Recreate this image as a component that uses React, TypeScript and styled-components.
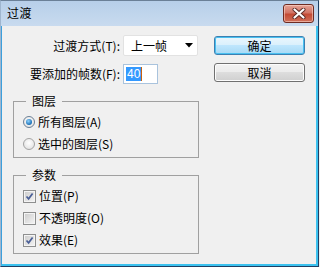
import styled, { createGlobalStyle } from 'styled-components';

const GlobalStyle = createGlobalStyle`
  html, body {
    margin: 0;
    padding: 0;
    background: #f0f0f0;
  }
  body {
    font-family: "Noto Sans CJK SC", "Liberation Sans", sans-serif;
    font-size: 12px;
    color: #000;
  }
`;

const Window = styled.div`
  width: 319px;
  height: 267px;
  box-sizing: border-box;
  display: flex;
  flex-direction: column;
  background: linear-gradient(#b7cfe9, #c9dbef 26px, #c3d6ec);
  border-top: 1px solid #6b8097;
  border-left: 1px solid #9fb6cf;
  border-right: 1px solid #1f3f63;
  border-bottom: 1px solid #1f3f63;
`;

const TitleBar = styled.div`
  height: 25px;
  flex: none;
  display: flex;
  align-items: flex-start;
  justify-content: space-between;
  padding: 0 4px 0 6px;
`;

const Title = styled.span`
  font-size: 12px;
  line-height: 24px;
  letter-spacing: 0.5px;
`;

const CloseButton = styled.button`
  margin-top: 3px;
  width: 31px;
  height: 19px;
  padding: 0;
  border: 1px solid #6e2b22;
  border-radius: 3px;
  background: linear-gradient(#e6a396, #d27566 45%, #c44b35 55%, #d0705a);
  box-shadow: inset 0 0 0 1px rgba(255, 220, 210, 0.55);
  display: flex;
  align-items: center;
  justify-content: center;
`;

const Client = styled.div`
  flex: 1;
  display: flex;
  gap: 15px;
  padding: 9px 11px 0 11px;
  background: #f0f0f0;
  border-left: 1px solid #3c9fdc;
  border-right: 2px solid #3cc2ef;
  border-bottom: 2px solid #3cc2ef;
`;

const MainColumn = styled.div`
  width: 186px;
  display: flex;
  flex-direction: column;
`;

const SideColumn = styled.div`
  width: 91px;
  display: flex;
  flex-direction: column;
  gap: 8px;
  padding-top: 1px;
`;

const FormRow = styled.div`
  display: grid;
  grid-template-columns: 107px auto;
  column-gap: 3px;
  align-items: center;
  height: 21px;
  margin-bottom: 7px;
`;

const Label = styled.label`
  text-align: right;
  white-space: nowrap;
  line-height: 16px;
`;

const Select = styled.div`
  width: 75px;
  height: 21px;
  box-sizing: border-box;
  display: flex;
  align-items: center;
  justify-content: space-between;
  padding: 0 4px 0 7px;
  background: #fff;
  border: 1px solid #e2e2e2;
  border-radius: 2px;
  line-height: 16px;
`;

const Input = styled.div`
  width: 35px;
  height: 20px;
  box-sizing: border-box;
  display: flex;
  align-items: center;
  padding-left: 2px;
  background: #fff;
  border: 1px solid #a9c3dd;
  font-family: "Liberation Sans", sans-serif;
  font-size: 12px;
`;

const Selected = styled.span`
  background: #3399ff;
  color: #fff;
  line-height: 14px;
  padding: 0 1px;
`;

const Caret = styled.span`
  width: 1px;
  height: 14px;
  background: #c8620e;
`;

const Button = styled.button<{ $default?: boolean }>`
  width: 91px;
  height: 19px;
  padding: 0;
  font-family: inherit;
  font-size: 12px;
  line-height: 16px;
  color: #000;
  border-radius: 3px;
  border: 1px solid ${(p) => (p.$default ? '#3c7fb1' : '#707070')};
  background: ${(p) =>
    p.$default
      ? 'linear-gradient(#eaf6fd, #d9f0fc 50%, #bee6fd 50%, #a7d9f5)'
      : 'linear-gradient(#f2f2f2, #ebebeb 50%, #dddddd 50%, #cfcfcf)'};
  box-shadow: ${(p) =>
    p.$default ? 'inset 0 0 0 1px #48c0f0' : 'inset 0 0 0 1px #fcfcfc'};
`;

const Group = styled.fieldset<{ $gapTop?: number }>`
  margin: ${(p) => p.$gapTop ?? 0}px 0 0 0;
  padding: 3px 0 2px 0;
  border: 1px solid #a0a0a0;
  min-width: 0;
`;

const Legend = styled.legend`
  margin-left: 12px;
  padding: 0 6px;
  line-height: 14px;
`;

const Option = styled.div`
  height: 22px;
  display: flex;
  align-items: center;
  gap: 3px;
  padding-left: 9px;
  line-height: 16px;
`;

const Radio = styled.span<{ $checked?: boolean }>`
  width: 12px;
  height: 12px;
  box-sizing: border-box;
  border-radius: 50%;
  border: 1px solid ${(p) => (p.$checked ? '#6b7f95' : '#a3a3a3')};
  background: radial-gradient(circle at 50% 40%, #ffffff, #dcdcdc);
  display: flex;
  align-items: center;
  justify-content: center;
  &::after {
    content: '';
    display: ${(p) => (p.$checked ? 'block' : 'none')};
    width: 6px;
    height: 6px;
    border-radius: 50%;
    background: radial-gradient(circle at 40% 35%, #8fd3ff, #1a6fb5 70%, #12508a);
  }
`;

const Check = styled.span`
  width: 13px;
  height: 13px;
  box-sizing: border-box;
  border: 1px solid #8e8f8f;
  background: linear-gradient(135deg, #cbcbcb, #f5f5f5);
  box-shadow: inset 0 0 0 1px #f4f4f4;
  display: flex;
  align-items: center;
  justify-content: center;
`;

function CheckBox({ checked }: { checked?: boolean }) {
  return (
    <Check>
      {checked && (
        <svg width="9" height="9" viewBox="0 0 9 9">
          <path d="M1.5 4.5 L3.6 6.8 L7.6 1.5" fill="none" stroke="#4a5f97" strokeWidth="1.7" />
        </svg>
      )}
    </Check>
  );
}

export default function App() {
  return (
    <>
      <GlobalStyle />
      <Window>
        <TitleBar>
          <Title>过渡</Title>
          <CloseButton aria-label="关闭">
            <svg width="14" height="11" viewBox="0 0 14 11">
              <path d="M2.5 1.5 L11.5 9.5 M11.5 1.5 L2.5 9.5" stroke="#5a2a25" strokeWidth="4" strokeLinecap="round" />
              <path d="M2.5 1.5 L11.5 9.5 M11.5 1.5 L2.5 9.5" stroke="#ffffff" strokeWidth="2.2" strokeLinecap="round" />
            </svg>
          </CloseButton>
        </TitleBar>
        <Client>
          <MainColumn>
            <FormRow>
              <Label>过渡方式(T):</Label>
              <Select>
                <span>上一帧</span>
                <svg width="8" height="5" viewBox="0 0 8 5">
                  <path d="M0 0 H8 L4 4.5 Z" fill="#000" />
                </svg>
              </Select>
            </FormRow>
            <FormRow>
              <Label>要添加的帧数(F):</Label>
              <Input>
                <Selected>40</Selected>
                <Caret />
              </Input>
            </FormRow>
            <Group $gapTop={3}>
              <Legend>图层</Legend>
              <Option>
                <Radio $checked />
                所有图层(A)
              </Option>
              <Option>
                <Radio />
                选中的图层(S)
              </Option>
            </Group>
            <Group $gapTop={10}>
              <Legend>参数</Legend>
              <Option>
                <CheckBox checked />
                位置(P)
              </Option>
              <Option>
                <CheckBox />
                不透明度(O)
              </Option>
              <Option>
                <CheckBox checked />
                效果(E)
              </Option>
            </Group>
          </MainColumn>
          <SideColumn>
            <Button $default>确定</Button>
            <Button>取消</Button>
          </SideColumn>
        </Client>
      </Window>
    </>
  );
}
